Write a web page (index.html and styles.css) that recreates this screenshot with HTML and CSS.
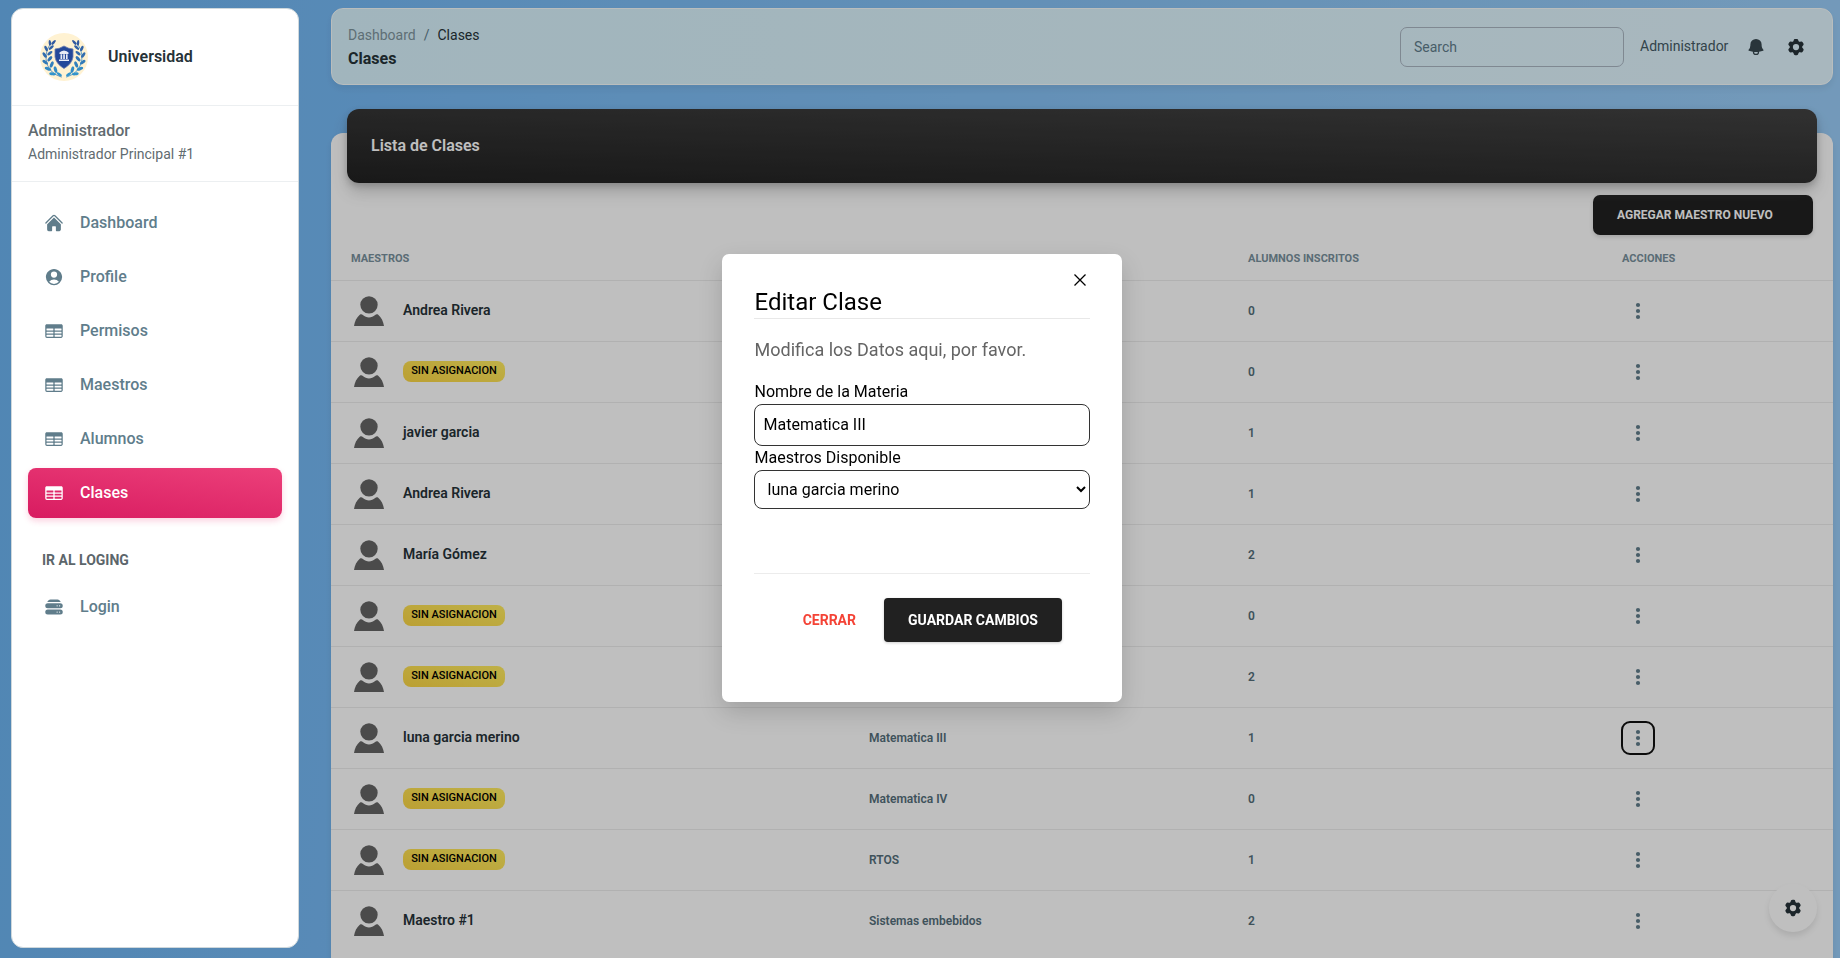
FILE: index.html
```html
<!DOCTYPE html>
<html lang="es">
<head>
<meta charset="utf-8">
<title>Universidad - Clases</title>
<link rel="stylesheet" href="styles.css">
</head>
<body>
<svg class="sprite" aria-hidden="true">
  <symbol id="home" viewBox="0 0 24 24"><path d="M11.47 3.84a.75.75 0 011.06 0l8.69 8.69a.75.75 0 101.06-1.06l-8.689-8.69a2.25 2.25 0 00-3.182 0l-8.69 8.69a.75.75 0 001.061 1.06l8.69-8.69z"/><path d="M12 5.432l8.159 8.159c.03.03.06.058.091.086v6.198c0 1.035-.84 1.875-1.875 1.875H15a.75.75 0 01-.75-.75v-4.5a.75.75 0 00-.75-.75h-3a.75.75 0 00-.75.75V21a.75.75 0 01-.75.75H5.625a1.875 1.875 0 01-1.875-1.875v-6.198a2.29 2.29 0 00.091-.086L12 5.43z"/></symbol>
  <symbol id="user" viewBox="0 0 24 24"><path fill-rule="evenodd" d="M18.685 19.097A9.723 9.723 0 0021.75 12c0-5.385-4.365-9.75-9.75-9.75S2.25 6.615 2.25 12a9.723 9.723 0 003.065 7.097A9.716 9.716 0 0012 21.75a9.716 9.716 0 006.685-2.653zm-12.54-1.285A7.486 7.486 0 0112 15a7.486 7.486 0 015.855 2.812A8.224 8.224 0 0112 20.25a8.224 8.224 0 01-5.855-2.438zM15.75 9a3.75 3.75 0 11-7.5 0 3.75 3.75 0 017.5 0z"/></symbol>
  <symbol id="table" viewBox="0 0 24 24"><path fill-rule="evenodd" d="M1.5 5.625c0-1.036.84-1.875 1.875-1.875h17.25c1.035 0 1.875.84 1.875 1.875v12.75c0 1.035-.84 1.875-1.875 1.875H3.375A1.875 1.875 0 011.5 18.375V5.625zM21 9.375A.375.375 0 0020.625 9h-7.5a.375.375 0 00-.375.375v1.5c0 .207.168.375.375.375h7.5a.375.375 0 00.375-.375v-1.5zm0 3.75a.375.375 0 00-.375-.375h-7.5a.375.375 0 00-.375.375v1.5c0 .207.168.375.375.375h7.5a.375.375 0 00.375-.375v-1.5zm0 3.75a.375.375 0 00-.375-.375h-7.5a.375.375 0 00-.375.375v1.5c0 .207.168.375.375.375h7.5a.375.375 0 00.375-.375v-1.5zM10.875 18.75a.375.375 0 00.375-.375v-1.5a.375.375 0 00-.375-.375h-7.5a.375.375 0 00-.375.375v1.5c0 .207.168.375.375.375h7.5zM3.375 15h7.5a.375.375 0 00.375-.375v-1.5a.375.375 0 00-.375-.375h-7.5a.375.375 0 00-.375.375v1.5c0 .207.168.375.375.375zm0-3.75h7.5a.375.375 0 00.375-.375v-1.5A.375.375 0 0010.875 9h-7.5A.375.375 0 003 9.375v1.5c0 .207.168.375.375.375z"/></symbol>
  <symbol id="server" viewBox="0 0 24 24"><path d="M5.507 4.048A3 3 0 017.785 3h8.43a3 3 0 012.278 1.048l1.722 2.008A4.533 4.533 0 0019.5 6h-15c-.243 0-.482.02-.715.056l1.722-2.008z"/><path fill-rule="evenodd" d="M1.5 10.5a3 3 0 013-3h15a3 3 0 110 6h-15a3 3 0 01-3-3zm15 0a.75.75 0 11-1.5 0 .75.75 0 011.5 0zm2.25.75a.75.75 0 100-1.5.75.75 0 000 1.5zM4.5 15a3 3 0 100 6h15a3 3 0 100-6h-15zm11.25 3.75a.75.75 0 100-1.5.75.75 0 000 1.5zM19.5 18a.75.75 0 11-1.5 0 .75.75 0 011.5 0z"/></symbol>
  <symbol id="bell" viewBox="0 0 24 24"><path fill-rule="evenodd" d="M5.25 9a6.75 6.75 0 0113.5 0v.75c0 2.123.8 4.057 2.118 5.52a.75.75 0 01-.297 1.206c-1.544.57-3.16.99-4.831 1.243a3.75 3.75 0 11-7.48 0 24.585 24.585 0 01-4.831-1.244.75.75 0 01-.298-1.205A8.217 8.217 0 005.25 9.75V9zm4.502 8.9a2.25 2.25 0 104.496 0 25.057 25.057 0 01-4.496 0z"/></symbol>
  <symbol id="cog" viewBox="0 0 24 24"><path fill-rule="evenodd" d="M11.078 2.25c-.917 0-1.699.663-1.85 1.567L9.05 4.889c-.02.12-.115.26-.297.348a7.493 7.493 0 00-.986.57c-.166.115-.334.126-.45.083L6.3 5.508a1.875 1.875 0 00-2.282.819l-.922 1.597a1.875 1.875 0 00.432 2.385l.84.692c.095.078.17.229.154.43a7.598 7.598 0 000 1.139c.015.2-.059.352-.153.43l-.841.692a1.875 1.875 0 00-.432 2.385l.922 1.597a1.875 1.875 0 002.282.818l1.019-.382c.115-.043.283-.031.45.082.312.214.641.405.985.57.182.088.277.228.297.35l.178 1.071c.151.904.933 1.567 1.85 1.567h1.844c.916 0 1.699-.663 1.85-1.567l.178-1.072c.02-.12.114-.26.297-.349.344-.165.673-.356.985-.57.167-.114.335-.125.45-.082l1.02.382a1.875 1.875 0 002.28-.819l.923-1.597a1.875 1.875 0 00-.432-2.385l-.84-.692c-.095-.078-.17-.229-.154-.43a7.614 7.614 0 000-1.139c-.016-.2.059-.352.153-.43l.84-.692c.708-.582.891-1.59.433-2.385l-.922-1.597a1.875 1.875 0 00-2.282-.818l-1.02.382c-.114.043-.282.031-.449-.083a7.49 7.49 0 00-.985-.57c-.183-.087-.277-.227-.297-.348l-.179-1.072a1.875 1.875 0 00-1.85-1.567h-1.843zM12 15.75a3.75 3.75 0 100-7.5 3.75 3.75 0 000 7.5z"/></symbol>
  <symbol id="dots" viewBox="0 0 24 24"><circle cx="12" cy="6" r="2.1"/><circle cx="12" cy="12" r="2.1"/><circle cx="12" cy="18" r="2.1"/></symbol>
  <symbol id="person" viewBox="0 0 88 88"><circle cx="44" cy="26" r="25.500"/><path d="M0 88C2 75 8 62 17 55C20 53 23 53 26 56C36 65 52 65 62 56C65 53 68 53 71 55C80 62 86 75 88 88Z"/></symbol>
  <symbol id="branch" viewBox="0 0 48 48"><path d="M21.500 45.500Q7 41 5 27Q4 15 12 8" fill="none" stroke="currentColor" stroke-width=".8"/><g fill="url(#leaf)">
    <ellipse cx="13" cy="8.500" rx="3.200" ry="1.300" transform="rotate(-50 13 8.500)"/><ellipse cx="9" cy="9" rx="3" ry="1.300" transform="rotate(-95 9 9)"/>
    <ellipse cx="10.500" cy="14" rx="3.300" ry="1.400" transform="rotate(-40 10.500 14)"/><ellipse cx="5" cy="15" rx="3.200" ry="1.500" transform="rotate(-115 5 15)"/>
    <ellipse cx="9" cy="20" rx="3.300" ry="1.500" transform="rotate(-38 9 20)"/><ellipse cx="3.500" cy="22" rx="3.300" ry="1.500" transform="rotate(-125 3.500 22)"/>
    <ellipse cx="9" cy="26" rx="3.400" ry="1.600" transform="rotate(-50 9 26)"/><ellipse cx="4" cy="29.500" rx="3.400" ry="1.600" transform="rotate(-142 4 29.500)"/>
    <ellipse cx="11" cy="32" rx="3.500" ry="1.700" transform="rotate(-68 11 32)"/><ellipse cx="7" cy="36.500" rx="3.600" ry="1.700" transform="rotate(-158 7 36.500)"/>
    <ellipse cx="15" cy="37.500" rx="3.600" ry="1.700" transform="rotate(-105 15 37.500)"/><ellipse cx="12" cy="42" rx="3.700" ry="1.600" transform="rotate(-172 12 42)"/>
    <ellipse cx="19" cy="42.500" rx="3.300" ry="1.400" transform="rotate(-145 19 42.500)"/></g></symbol>
  <defs><linearGradient id="leaf" gradientUnits="userSpaceOnUse" x1="0" y1="6" x2="0" y2="44"><stop offset="0" stop-color="#32559c"/><stop offset=".5" stop-color="#3272b2"/><stop offset="1" stop-color="#3398cf"/></linearGradient></defs>
</svg>

<aside class="sidebar">
  <div class="brand">
    <svg class="logo" viewBox="0 0 48 48"><circle cx="24" cy="24" r="24" fill="#fff2d2"/>
      <g transform="translate(1.400 1.400) scale(.94)"><use href="#branch" class="branch-left"/><use href="#branch" class="branch-right" transform="translate(48 0) scale(-1 1)"/></g>
      <path d="M24 13Q29 16 33 16V24Q32 31 24 35.500Q16 31 15 24V16Q19 16 24 13Z" fill="#24489a" stroke="#6d7fae" stroke-width=".8"/>
      <path d="M19.500 19.500Q21 17.800 24 17.500Q27 17.800 28.500 19.500V21H19.500ZM20.500 21.300H22.200V26H20.500ZM23.200 21.300H24.900V26H23.200ZM26 21.300H27.600V26H26ZM19 26.500H29V28H19Z" fill="#e9ecf5"/></svg>
    <span>Universidad</span>
  </div>
  <div class="account"><strong>Administrador</strong><span>Administrador Principal #1</span></div>
  <nav class="nav">
    <a class="nav-item"><svg class="icon"><use href="#home"/></svg><span>Dashboard</span></a>
    <a class="nav-item"><svg class="icon"><use href="#user"/></svg><span>Profile</span></a>
    <a class="nav-item"><svg class="icon"><use href="#table"/></svg><span>Permisos</span></a>
    <a class="nav-item"><svg class="icon"><use href="#table"/></svg><span>Maestros</span></a>
    <a class="nav-item"><svg class="icon"><use href="#table"/></svg><span>Alumnos</span></a>
    <a class="nav-item active"><svg class="icon"><use href="#table"/></svg><span>Clases</span></a>
    <h2 class="nav-title">IR AL LOGING</h2>
    <a class="nav-item"><svg class="icon"><use href="#server"/></svg><span>Login</span></a>
  </nav>
</aside>

<main class="content">
  <header class="topbar">
    <div class="crumbs">
      <div class="trail"><span class="muted">Dashboard</span><span class="slash">/</span><span>Clases</span></div>
      <h1>Clases</h1>
    </div>
    <input class="search" placeholder="Search">
    <span class="who">Administrador</span>
    <svg class="icon bell"><use href="#bell"/></svg>
    <svg class="icon gear"><use href="#cog"/></svg>
  </header>
  <section class="card">
    <div class="card-head">Lista de Clases</div>
    <div class="toolbar"><button class="add">AGREGAR MAESTRO NUEVO</button></div>
    <table class="grid">
      <colgroup><col class="c1"><col class="c2"><col class="c3"><col class="c4"></colgroup>
      <thead><tr><th>MAESTROS</th><th></th><th>ALUMNOS INSCRITOS</th><th>ACCIONES</th></tr></thead>
      <tbody>
        <tr><td><div class="teacher"><svg class="avatar"><use href="#person"/></svg><b>Andrea Rivera</b></div></td><td></td><td>0</td><td><button class="more"><svg><use href="#dots"/></svg></button></td></tr>
        <tr><td><div class="teacher"><svg class="avatar"><use href="#person"/></svg><span class="badge">SIN ASIGNACION</span></div></td><td></td><td>0</td><td><button class="more"><svg><use href="#dots"/></svg></button></td></tr>
        <tr><td><div class="teacher"><svg class="avatar"><use href="#person"/></svg><b>javier garcia</b></div></td><td></td><td>1</td><td><button class="more"><svg><use href="#dots"/></svg></button></td></tr>
        <tr><td><div class="teacher"><svg class="avatar"><use href="#person"/></svg><b>Andrea Rivera</b></div></td><td></td><td>1</td><td><button class="more"><svg><use href="#dots"/></svg></button></td></tr>
        <tr><td><div class="teacher"><svg class="avatar"><use href="#person"/></svg><b>María Gómez</b></div></td><td></td><td>2</td><td><button class="more"><svg><use href="#dots"/></svg></button></td></tr>
        <tr><td><div class="teacher"><svg class="avatar"><use href="#person"/></svg><span class="badge">SIN ASIGNACION</span></div></td><td></td><td>0</td><td><button class="more"><svg><use href="#dots"/></svg></button></td></tr>
        <tr><td><div class="teacher"><svg class="avatar"><use href="#person"/></svg><span class="badge">SIN ASIGNACION</span></div></td><td></td><td>2</td><td><button class="more"><svg><use href="#dots"/></svg></button></td></tr>
        <tr><td><div class="teacher"><svg class="avatar"><use href="#person"/></svg><b>luna garcia merino</b></div></td><td>Matematica III</td><td>1</td><td><button class="more focused"><svg><use href="#dots"/></svg></button></td></tr>
        <tr><td><div class="teacher"><svg class="avatar"><use href="#person"/></svg><span class="badge">SIN ASIGNACION</span></div></td><td>Matematica IV</td><td>0</td><td><button class="more"><svg><use href="#dots"/></svg></button></td></tr>
        <tr><td><div class="teacher"><svg class="avatar"><use href="#person"/></svg><span class="badge">SIN ASIGNACION</span></div></td><td>RTOS</td><td>1</td><td><button class="more"><svg><use href="#dots"/></svg></button></td></tr>
        <tr><td><div class="teacher"><svg class="avatar"><use href="#person"/></svg><b>Maestro #1</b></div></td><td>Sistemas embebidos</td><td>2</td><td><button class="more"><svg><use href="#dots"/></svg></button></td></tr>
      </tbody>
    </table>
  </section>
</main>

<button class="fab"><svg class="icon"><use href="#cog"/></svg></button>
<div class="overlay"></div>

<div class="modal" role="dialog">
  <button class="close"><svg viewBox="0 0 12 12"><path d="M.5.5l11 11M11.500.5l-11 11"/></svg></button>
  <h2>Editar Clase</h2>
  <p>Modifica los Datos aqui, por favor.</p>
  <label>Nombre de la Materia</label>
  <input class="field" value="Matematica III">
  <label>Maestros Disponible</label>
  <select class="field pick"><option>luna garcia merino</option></select>
  <div class="actions"><button class="cancel">CERRAR</button><button class="save">GUARDAR CAMBIOS</button></div>
</div>
</body>
</html>
```

FILE: styles.css
```css
* { box-sizing: border-box; }
html, body { height: 100%; }
body { margin: 0; overflow: hidden; font-family: Roboto, sans-serif; color: #263238; background: linear-gradient(94deg, #6cb3f0 0%, #76b9f4 20%, #86c1f4 55%, #9acdf8 96%); }
button, input, select { font-family: inherit; }
button { border: 0; padding: 0; background: none; }
.sprite { position: absolute; width: 0; height: 0; }
.icon { width: 20px; height: 20px; fill: currentColor; flex: none; }

.sidebar { position: fixed; z-index: 20; left: 11px; top: 8px; width: 288px; height: 940px; background: #fff; border: 1px solid #cfd8dc; border-radius: 12px; }
.brand { height: 97px; padding-left: 28px; display: flex; align-items: center; gap: 20px; border-bottom: 1px solid #eceff1; font-size: 16px; font-weight: 600; }
.brand span { padding-bottom: 1px; }
.logo { width: 48px; height: 48px; }
.branch-left { color: #3474b4; }
.branch-right { color: #3489c6; }
.account { height: 76px; padding: 12px 16px 0; display: flex; flex-direction: column; border-bottom: 1px solid #eceff1; color: #616b70; }
.account strong { font-size: 16px; font-weight: 500; line-height: 26px; }
.account span { font-size: 14px; line-height: 21px; }
.nav { padding: 16px; display: flex; flex-direction: column; gap: 4px; }
.nav-item { height: 50px; padding-left: 16px; display: flex; align-items: center; gap: 16px; border-radius: 8px; font-size: 16px; font-weight: 500; color: #607d8b; }
.nav-item span { padding-bottom: 1px; }
.active { color: #fff; background: linear-gradient(8deg, #d81b60, #ec407a); box-shadow: 0 3px 6px rgba(233, 30, 99, .2); }
.nav-title { margin: 27px 0 7px 14px; font-size: 14px; line-height: 22px; font-weight: 700; color: #5c666b; }

.content { margin-left: 331px; width: 1502px; height: 100%; overflow: clip; overflow-clip-margin: 20px; padding-top: 8px; }
.topbar { height: 77px; padding: 0 26px 0 16px; display: flex; align-items: center; border: 1px solid #f7fcfc; border-radius: 12px; background: linear-gradient(90deg, #d7f2fc, #e1f5fe); box-shadow: 0 4px 6px rgba(0, 0, 0, .06); }
.crumbs { flex: 1; padding-top: 2px; }
.trail { display: flex; gap: 8px; font-size: 14px; line-height: 21px; }
.muted { color: #7e949d; }
.slash { color: #607d8b; }
.crumbs h1 { margin: 0; font-size: 16px; line-height: 25px; font-weight: 700; }
.search { width: 224px; height: 40px; padding: 0 13px; border: 1px solid #aab6c2; border-radius: 7px; background: transparent; font-size: 14px; }
.search::placeholder { color: #607d8b; }
.who { margin: 0 17px 1px 16px; font-size: 14px; width: 89px; color: #455a64; }
.bell { margin-right: 20px; color: #37474f; }
.gear { color: #263238; }

.card { height: 900px; margin-top: 48px; background: #fff; border-radius: 12px; box-shadow: 0 4px 6px rgba(0, 0, 0, .08); }
.card-head { height: 74px; margin: 0 16px; display: flex; align-items: center; padding: 0 0 1px 24px; transform: translateY(-24px); border-radius: 12px; background: linear-gradient(2deg, #212121, #424242); box-shadow: 0 10px 15px rgba(66, 66, 66, .2), 0 3px 6px rgba(66, 66, 66, .25); color: #fff; font-size: 16px; font-weight: 600; }
.toolbar { height: 52px; margin-top: -12px; padding-right: 20px; display: flex; justify-content: flex-end; align-items: flex-start; }
.add { width: 220px; height: 40px; padding-left: 24px; text-align: left; border-radius: 7px; background: #212121; color: #fff; font-size: 12px; font-weight: 700; box-shadow: 0 2px 4px rgba(0, 0, 0, .15); }
.grid { width: 1502px; table-layout: fixed; border-collapse: collapse; font-size: 12px; }
.c1 { width: 518px; } .c2 { width: 379px; } .c3 { width: 374px; } .c4 { width: 231px; }
.grid th, .grid td { padding: 0 20px; text-align: left; border-bottom: 1px solid #ececec; }
.grid th { height: 33px; padding-bottom: 10px; font-size: 11px; font-weight: 700; color: #78909c; }
.grid td { height: 61px; font-weight: 600; color: #546e7a; }
.grid tbody tr:last-child td { border: 0; }
.teacher { display: flex; align-items: center; gap: 19px; padding-left: 3px; }
.teacher b { padding-bottom: 1px; font-size: 14px; font-weight: 600; color: #263238; }
.avatar { width: 30px; height: 30px; fill: #646464; }
.badge { width: 102px; height: 21px; line-height: 19px; text-align: center; border-radius: 8px; background: linear-gradient(15deg, #fad544, #ffec60); color: #000; font-size: 11px; font-weight: 500; }
.more { width: 30px; height: 30px; margin-left: 1px; display: grid; place-items: center; border-radius: 7px; }
.more svg { width: 24px; height: 24px; fill: #607d8b; }
.focused { outline: 2px solid #101010; }

.fab { position: fixed; right: 23px; bottom: 26px; width: 48px; height: 48px; display: grid; place-items: center; border-radius: 50%; background: #fff; color: #263238; box-shadow: 0 4px 6px rgba(0, 0, 0, .1); }
.overlay { position: fixed; inset: 0; background: rgba(0, 0, 0, .25); }

.modal { position: fixed; z-index: 30; left: 722px; top: 254px; width: 400px; height: 448px; padding: 32px; display: flex; flex-direction: column; background: #fff; border-radius: 7px; color: #000; box-shadow: 0 10px 24px rgba(0, 0, 0, .16); }
.close { position: absolute; right: 36px; top: 20px; width: 12px; height: 12px; }
.close svg { display: block; width: 12px; height: 12px; overflow: visible; stroke: #000; stroke-width: 1.3; }
.modal h2 { margin: 0; height: 33px; line-height: 32px; border-bottom: 1px solid #e8e8e8; font-size: 24px; font-weight: 400; }
.modal p { margin: 17px 0; line-height: 27px; font-size: 18px; color: #646464; }
.modal h2, .modal p, .modal label { text-indent: .5px; }
.modal label { height: 24px; line-height: 24px; font-size: 16px; }
.field { height: 42px; padding: 0 8.500px 1px; border: 1px solid #333; border-radius: 8px; background: #fff; color: #000; font-size: 16px; }
.pick { height: 39px; }
.actions { margin-top: 64px; padding: 24px 28px 0 0; display: flex; justify-content: flex-end; align-items: center; border-top: 1px solid #ececec; }
.actions button { font-size: 14px; font-weight: 700; }
.cancel { color: #f44336; margin-right: 28px; }
.save { width: 178px; height: 44px; border-radius: 4px; background: #212121; color: #fff; box-shadow: 0 1px 3px rgba(0, 0, 0, .2); }
```
